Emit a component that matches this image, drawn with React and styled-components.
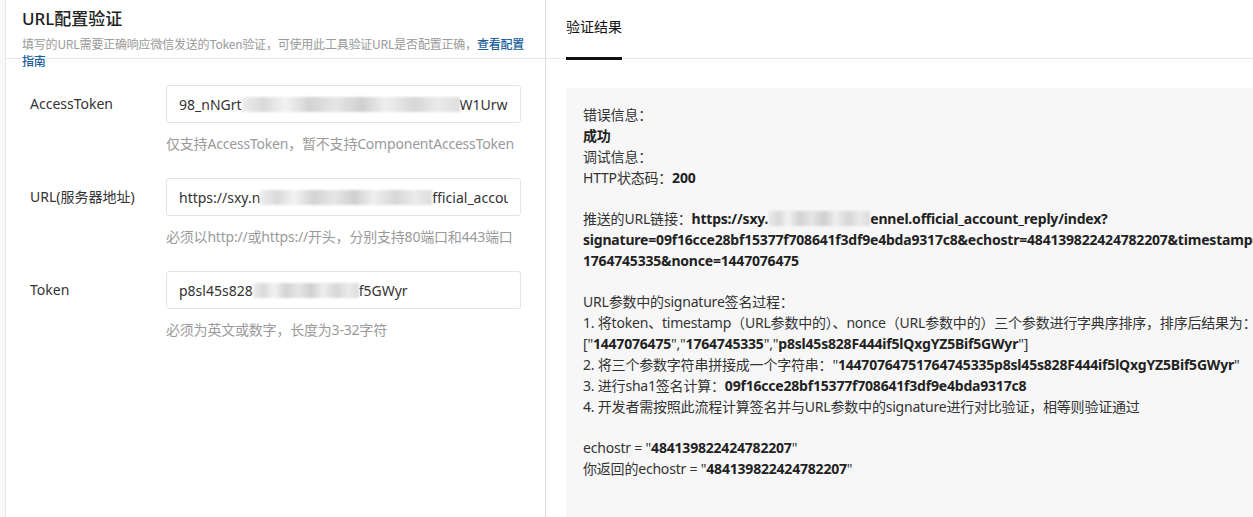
import React from "react"
import styled, { createGlobalStyle } from "styled-components"

const GlobalStyle = createGlobalStyle`
  html, body {
    margin: 0;
    padding: 0;
    background: #fff;
    overflow: hidden;
  }
  body {
    font-family: "Noto Sans", "Noto Sans CJK SC", sans-serif;
    color: #333;
  }
`

const Page = styled.div`
  display: flex;
  width: 1253px;
  height: 517px;
  overflow: hidden;
  background: #f8f8f8;
`

const LeftPanel = styled.section`
  margin-left: 5px;
  width: 539px;
  flex-shrink: 0;
  background: #fff;
  border-left: 1px solid #e6e6e6;
  border-right: 1px solid #dcdcdc;
`

const Header = styled.div`
  height: 59px;
  box-sizing: border-box;
  border-bottom: 1px solid #e7e7e7;
  padding: 7px 12px 0 16px;
`

const Title = styled.h2`
  margin: 0;
  font-size: 17px;
  font-weight: 500;
  line-height: 24px;
  color: #222;
  font-family: "Noto Sans", "Noto Sans CJK SC", sans-serif;
`

const Desc = styled.p`
  margin: 4px 0 0;
  font-size: 12px;
  line-height: 17px;
  color: #9a9a9a;
  font-family: "Noto Sans CJK SC", sans-serif;
  letter-spacing: -0.2px;

  a {
    color: #1b5f9e;
    text-decoration: none;
    font-weight: 500;
  }
`

const Form = styled.div`
  padding: 26px 24px 0 24px;
`

const Row = styled.div`
  display: grid;
  grid-template-columns: 136px 355px;
  margin-bottom: 24px;
`

const Label = styled.label`
  font-size: 14px;
  line-height: 38px;
  color: #333;
`

const InputBox = styled.div`
  height: 38px;
  box-sizing: border-box;
  border: 1px solid #e4e4e4;
  border-radius: 3px;
  padding: 0 12px;
  display: flex;
  align-items: center;
  font-size: 14px;
  color: #333;
`

const Value = styled.div`
  flex: 1;
  min-width: 0;
  display: flex;
  align-items: center;
  overflow: hidden;
  white-space: nowrap;
`

const Hint = styled.div`
  grid-column: 2;
  margin-top: 10px;
  font-size: 14px;
  line-height: 21px;
  color: #9a9a9a;
  font-family: "Noto Sans", "Noto Sans CJK SC", sans-serif;
  letter-spacing: -0.2px;
`

const Blur = styled.span`
  display: inline-block;
  flex-shrink: 0;
  width: ${(p) => p.$w}px;
  height: ${(p) => p.$h || 15}px;
  vertical-align: middle;
  background: linear-gradient(
    90deg,
    #ececec 0%,
    #d6d6d6 10%,
    #f2f2f2 20%,
    #cfcfcf 31%,
    #e4e4e4 43%,
    #cbcbcb 55%,
    #eeeeee 66%,
    #d3d3d3 79%,
    #e9e9e9 90%,
    #dadada 100%
  );
  filter: blur(0.8px);
  opacity: 0.9;
`

const RightPanel = styled.section`
  flex: 1;
  min-width: 0;
  background: #fff;
`

const TabBar = styled.div`
  height: 59px;
  box-sizing: border-box;
  border-bottom: 1px solid #e7e7e7;
  padding-left: 20px;
  display: flex;
`

const Tab = styled.div`
  font-size: 14px;
  line-height: 20px;
  padding-top: 16px;
  color: #111;
  border-bottom: 3px solid #111;
  margin-bottom: -2px;
  font-family: "Noto Sans CJK SC", sans-serif;
`

const ResultBox = styled.div`
  margin: 29px 0 0 20px;
  width: 760px;
  height: 440px;
  background: #f7f7f7;
  padding: 16px 0 0 17px;
  box-sizing: border-box;
  font-size: 14px;
  line-height: 21px;
  color: #333;
  font-family: "Noto Sans", "Noto Sans CJK SC", sans-serif;
  letter-spacing: -0.2px;
`

const Line = styled.div`
  white-space: nowrap;
  height: 21px;
  display: flex;
  align-items: center;
`

const Gap = styled.div`
  height: 20px;
`

const B = styled.b`
  font-weight: 700;
  color: #222;
`

const fields = [
  {
    label: "AccessToken",
    value: (
      <>
        98_nNGrt<Blur $w={218} />W1Urwc
      </>
    ),
    hint: "仅支持AccessToken，暂不支持ComponentAccessToken",
  },
  {
    label: "URL(服务器地址)",
    value: (
      <>
        https://sxy.n<Blur $w={172} />fficial_account_reply
      </>
    ),
    hint: "必须以http://或https://开头，分别支持80端口和443端口",
  },
  {
    label: "Token",
    value: (
      <>
        p8sl45s828<Blur $w={106} />f5GWyr
      </>
    ),
    hint: "必须为英文或数字，长度为3-32字符",
  },
]

const App = () => {
  return (
    <>
      <GlobalStyle />
      <Page>
        <LeftPanel>
          <Header>
            <Title>URL配置验证</Title>
            <Desc>
              填写的URL需要正确响应微信发送的Token验证，可使用此工具验证URL是否配置正确，
              <a href="#">查看配置指南</a>
            </Desc>
          </Header>
          <Form>
            {fields.map((f) => (
              <Row key={f.label}>
                <Label>{f.label}</Label>
                <InputBox>
                  <Value>{f.value}</Value>
                </InputBox>
                <Hint>{f.hint}</Hint>
              </Row>
            ))}
          </Form>
        </LeftPanel>
        <RightPanel>
          <TabBar>
            <Tab>验证结果</Tab>
          </TabBar>
          <ResultBox>
            <Line>错误信息：</Line>
            <Line>
              <B>成功</B>
            </Line>
            <Line>调试信息：</Line>
            <Line>
              HTTP状态码：<B>200</B>
            </Line>
            <Gap />
            <Line>
              推送的URL链接：<B>https://sxy.</B>
              <Blur $w={102} />
              <B>ennel.official_account_reply/index?</B>
            </Line>
            <Line>
              <B>
                signature=09f16cce28bf15377f708641f3df9e4bda9317c8&amp;echostr=484139822424782207&amp;timestamp=
              </B>
            </Line>
            <Line>
              <B>1764745335&amp;nonce=1447076475</B>
            </Line>
            <Gap />
            <Line>URL参数中的signature签名过程：</Line>
            <Line>
              1. 将token、timestamp（URL参数中的）、nonce（URL参数中的）三个参数进行字典序排序，排序后结果为：
            </Line>
            <Line>
              ["<B>1447076475</B>","<B>1764745335</B>","<B>p8sl45s828F444if5lQxgYZ5Bif5GWyr</B>"]
            </Line>
            <Line>
              2. 将三个参数字符串拼接成一个字符串："<B>14470764751764745335p8sl45s828F444if5lQxgYZ5Bif5GWyr</B>"
            </Line>
            <Line>
              3. 进行sha1签名计算：<B>09f16cce28bf15377f708641f3df9e4bda9317c8</B>
            </Line>
            <Line>4. 开发者需按照此流程计算签名并与URL参数中的signature进行对比验证，相等则验证通过</Line>
            <Gap />
            <Line>
              echostr = "<B>484139822424782207</B>"
            </Line>
            <Line>
              你返回的echostr = "<B>484139822424782207</B>"
            </Line>
          </ResultBox>
        </RightPanel>
      </Page>
    </>
  )
}

export default App
